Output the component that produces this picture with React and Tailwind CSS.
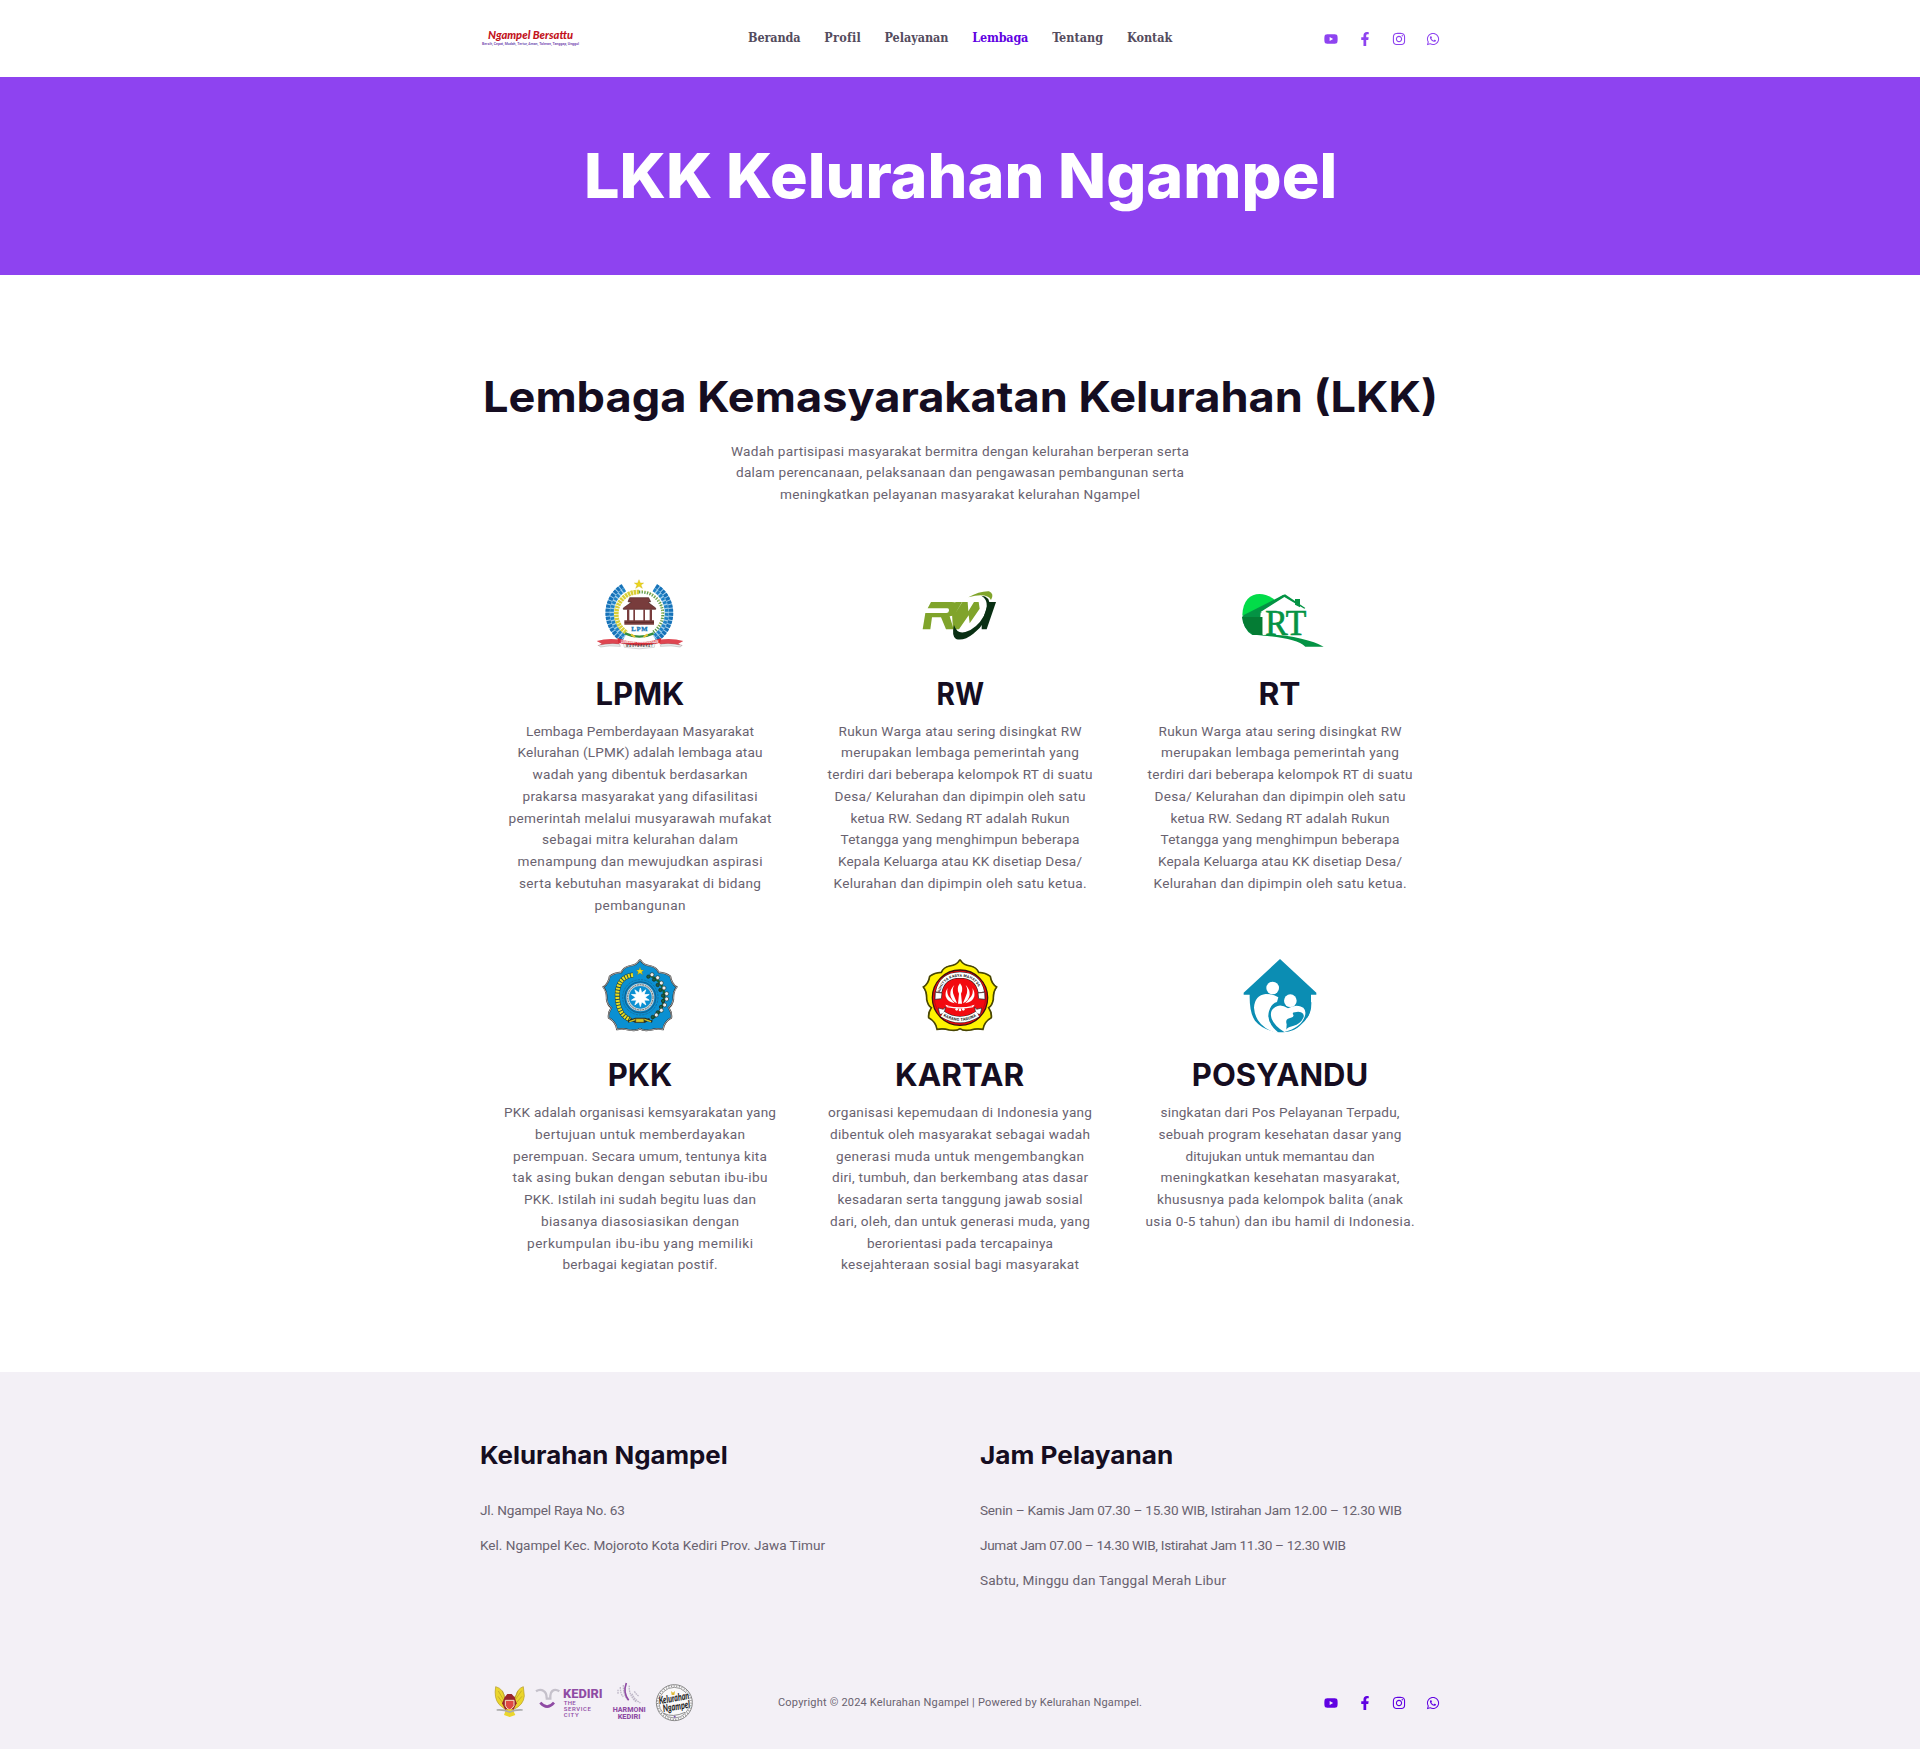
import React, { useLayoutEffect, useRef } from "react";
import { FaYoutube, FaFacebookF, FaInstagram, FaWhatsapp } from "react-icons/fa";

// One line of text, tracked so that it spans the given width.
function Line({ w, children, className = "" }) {
  const ref = useRef(null);
  useLayoutEffect(() => {
    const el = ref.current;
    el.style.letterSpacing = "0px";
    el.style.marginRight = "0px";
    const gap = (w - el.getBoundingClientRect().width) / (children.length - 1);
    el.style.letterSpacing = `${gap}px`;
    el.style.marginRight = `${-gap}px`;
  }, [w, children]);
  return <span ref={ref} className={"inline-block whitespace-nowrap " + className}>{children}</span>;
}

// A heading whose letters are widened or narrowed to span the given width.
function Wide({ w, children, className = "origin-center" }) {
  const ref = useRef(null);
  useLayoutEffect(() => {
    const el = ref.current;
    el.style.transform = `scaleX(${w / el.offsetWidth})`;
  }, [w, children]);
  return <span ref={ref} className={"inline-block whitespace-nowrap " + className}>{children}</span>;
}

function Paragraph({ lines }) {
  return (
    <p className="flex flex-col items-center font-['Roboto',sans-serif] text-[13.6px] leading-[21.76px] text-[#69626f]">
      {lines.map(([t, w], i) => <Line key={i} w={w}>{t}</Line>)}
    </p>
  );
}

function Wordmark() {
  return (
    <svg className="overflow-visible" width="110" height="26" viewBox="0 0 110 26" role="img">
      <text x="8" y="15" fontFamily="Lato, sans-serif" fontStyle="italic" fontWeight="900" fontSize="10.6" fill="#c3131d" textLength="85" lengthAdjust="spacingAndGlyphs">Ngampel Bersattu</text>
      <text x="2" y="21.2" fontFamily="Roboto, sans-serif" fontWeight="700" fontSize="4.4" fill="#7a55b5" textLength="97" lengthAdjust="spacingAndGlyphs">Bersih, Cepat, Mudah, Tertur, Aman, Toleran, Tanggap, Unggul</text>
    </svg>
  );
}

const nav = [["Beranda", 52.5], ["Profil", 35.5], ["Pelayanan", 64], ["Lembaga", 56], ["Tentang", 51], ["Kontak", 45.5]];

function Social({ className }) {
  return (
    <div className={"flex items-center gap-[20px] text-[14px] " + className}>
      <FaYoutube /><FaFacebookF /><FaInstagram /><FaWhatsapp />
    </div>
  );
}

function Lpmk() {
  return (
    <svg width="120" height="90" viewBox="0 0 360 270">
      <path d="M132 53A89 89 0 0 0 132 205M224 53A89 89 0 0 1 224 205" fill="none" stroke="#9fcdec" strokeWidth="25" />
      <path d="M128 48A95 95 0 0 0 128 210M228 48A95 95 0 0 1 228 210" fill="none" stroke="#1672b8" strokeWidth="13" strokeDasharray="9 3" />
      <path d="M135 59A82 82 0 0 0 135 199M221 59A82 82 0 0 1 221 199" fill="none" stroke="#1f82c5" strokeWidth="11" strokeDasharray="8 4" />
      <path d="M177 66A66 66 0 0 0 140 188" fill="none" stroke="#d8cf37" strokeWidth="14" strokeDasharray="7 2" />
      <path d="M177 66A66 66 0 0 1 217 188" fill="none" stroke="#5b9b4c" strokeWidth="9" strokeDasharray="4 4" />
      <path d="M185 62A66 66 0 0 1 230 172" fill="none" stroke="#e0d66a" strokeWidth="3" strokeDasharray="4 6" />
      <circle cx="178" cy="134" r="56" fill="#fff" />
      <path d="M177 29l4 10 10 0-8 6 4 10-10-6-10 6 4-10-8-6 10 0z" fill="#ecd51d" stroke="#c6a90d" />
      <path d="M149 83h57l6 12-8 2 23 17v4h-97v-4l24-17-10-2z" fill="#783c3c" stroke="#4c2424" strokeWidth="2" />
      <path d="M141 118h7v34h-7zM160 118h5v34h-5zM190 118h5v34h-5zM209 118h7v34h-7zM133 151h89v13h-89z" fill="#783c3c" />
      <path d="M134 157h88" stroke="#4c2424" strokeWidth="2" />
      <text x="154" y="184" fontFamily="Liberation Serif, serif" fontWeight="700" fontSize="20" fill="#1778ba" stroke="#1778ba" textLength="49">LPM</text>
      <path d="M135 190q22 10 43 10t43-10" fill="none" stroke="#358e3c" strokeWidth="7" />
      <path d="M153 193l12 8M203 193l-12 8" stroke="#e6c636" strokeWidth="6" />
      <path d="M50 213q34-10 70-4l-2 14q-30-3-66 5l13-7zM310 213q-34-10-73-4l2 14q34-3 69 5l-13-7z" fill="#df4550" />
      <path d="M56 226q38-8 63-3l2 6q-34-4-60 2zM306 226q-38-8-63-3l-2 6q34-4 60 2z" fill="#eee" stroke="#777" />
      <path d="M112 204q67 24 132 0l-3 14q-64 20-126 0z" fill="#d72e3a" />
      <text x="123" y="219" fontFamily="Roboto, sans-serif" fontWeight="700" fontSize="9" fill="#fff" textLength="112">LEMBAGA PEMBERDAYAAN</text>
      <path d="M130 221q48 13 95 0l-2 11q-46 9-90 0z" fill="#f7f7f7" stroke="#999" />
      <text x="138" y="232" fontFamily="Roboto, sans-serif" fontWeight="700" fontSize="8" fill="#444" textLength="80">MASYARAKAT</text>
    </svg>
  );
}

function Rw() {
  return (
    <svg width="120" height="90" viewBox="0 0 360 270">
      <path d="M93 96h62q20 0 15 17l-4 13q-4 12-17 13l12 39h-23l-15-36h-27l-5 36H68l8-49h63q7 0 8-7 1-7-5-7H83z" fill="#80a42b" />
      <path d="M186 96h-20l-10 36 3 46h18l29-42 3 24 30-44-3-20h-14l-17 28-2-28h-16l-21 34z" fill="#80a42b" />
      <path d="M205 82q33-19 62-18 17 8 6 26-12-23-68-8z" fill="#80a42b" />
      <path d="M244 77q26 1 25 32-5 49-49 82-29 23-52 16-14-9-6-42 9 28 34 21 35-11 56-49 20-44-8-60z" fill="#092f13" />
      <path d="M266 96h22l-28 82h-15v-20z" fill="#092f13" />
    </svg>
  );
}

function Rt() {
  return (
    <svg width="120" height="90" viewBox="0 0 360 270">
      <path d="M67 136C68 65 128 58 165 91l-82 45z" fill="#02dc49" />
      <path d="M67 137l105-53 18-10 6 3-74 52-5 66H97q-29-16-30-59z" fill="#049344" />
      <path d="M66 141h62v54H101q-33-20-35-54z" fill="#047c34" />
      <path d="M117 126l74-46 63 38-3 20h-5q-3-10-18-9v57l9 4v4H138V128z" fill="#fff" />
      <path d="M225 87h15v25l-15-8zM192 74l3-1 61 41-3 2-60-35-76 48-13-1z" fill="#049344" />
      <path d="M128 130v63h7v-64z" fill="#fff" />
      <text x="136" y="194" fontFamily="Liberation Serif, serif" fontSize="105" fill="#049344" stroke="#049344" strokeWidth="2" textLength="123" lengthAdjust="spacingAndGlyphs">RT</text>
      <path d="M111 196q69-6 133 10 42 9 67 24h-55q-30-28-145-34z" fill="#049344" />
    </svg>
  );
}

const half = "M180 45Q190 62 211 64Q230 68 236 83Q257 84 271 95Q274 117 290 127Q279 141 280 164Q277 182 266 189Q276 204 274 219Q252 231 249 254Q229 251 212 256Q190 260 180 252";

function Badge({ fill, stroke, edge, children }) {
  return (
    <svg width="120" height="90" viewBox="0 19 360 270">
      <path d={half} fill={fill} stroke={edge} strokeWidth="5" />
      <path d={half} transform="translate(360 0) scale(-1 1)" fill={fill} stroke={edge} strokeWidth="5" />
      <path d={half} fill="none" stroke={stroke} strokeWidth="2" />
      <path d={half} transform="translate(360 0) scale(-1 1)" fill="none" stroke={stroke} strokeWidth="2" />
      {children}
    </svg>
  );
}

const leaves = [[212, 92], [229, 101], [240, 117], [248, 132], [256, 149], [256, 165], [250, 183], [240, 199], [225, 213]];

function Pkk() {
  return (
    <Badge fill="#0b90d2" stroke="#ddd" edge="#333">
      <path d="M180 68l3 8 8 0-6 6 3 8-8-5-8 5 3-8-6-6 8 0z" fill="#f5dd16" stroke="#806e14" />
      <path d="M159 91Q110 97 112 157Q115 212 151 225" fill="none" stroke="#2c3b2a" strokeWidth="15" strokeDasharray="8 1" />
      <path d="M159 91Q110 97 112 157Q115 212 151 225" fill="none" stroke="#eadf20" strokeWidth="12" strokeDasharray="6 3" />
      <path d="M210 93Q253 111 253 158Q247 206 215 222" fill="none" stroke="#116337" strokeWidth="7" />
      {leaves.map(([x, y], i) => (
        <g key={i}>
          <circle cx={x + 4} cy={y - 2} r="6" fill="#eee" stroke="#263830" strokeWidth="2" />
          <circle cx={x - 7} cy={y + 4} r="5" fill="#17653e" stroke="#222" strokeWidth="2" />
        </g>
      ))}
      <circle cx="181" cy="158" r="53" fill="none" stroke="#1c608a" strokeWidth="2" strokeDasharray="7 3" />
      <circle cx="181" cy="158" r="47" fill="#087ebd" stroke="#164e75" strokeWidth="2" />
      <circle cx="181" cy="158" r="38" fill="#0b90d2" stroke="#c7d2d7" strokeWidth="8" />
      <circle cx="181" cy="158" r="38" fill="none" stroke="#59676d" strokeWidth="3" strokeDasharray="5 3" />
      {[0, 36, 72, 108, 144].map((a) => <path key={a} transform={`rotate(${a} 181 158)`} d="M181 130l6 20-6 8-6-8zM181 186l6-20-6-8-6 8z" fill="#fff" stroke="#fff" strokeWidth="2" />)}
      <path d="M144 231l23-8h28l22 8M151 223l15 8h28l15-8" fill="none" stroke="#293022" strokeWidth="7" />
      <path d="M148 231l20-7h25l20 7" fill="none" stroke="#d8c623" strokeWidth="4" />
      <path d="M167 222h25v11h-25z" fill="#d8c623" stroke="#333" strokeWidth="2" />
    </Badge>
  );
}

function Kartar() {
  return (
    <Badge fill="#fff200" stroke="#3c3a00" edge="#55530a">
      <circle cx="180" cy="159" r="83" fill="#f20a10" stroke="#3a1010" strokeWidth="4" />
      <circle cx="180" cy="159" r="77" fill="none" stroke="#5c0808" strokeWidth="1" />
      <path d="M116 143Q126 92 180 91Q234 92 244 143" fill="none" stroke="#222" strokeWidth="20" />
      <path d="M116 142Q126 92 180 91Q234 92 244 142" fill="none" stroke="#fff" strokeWidth="17" />
      <path id="top-arc" d="M120 144Q130 97 180 96Q230 97 240 144" fill="none" />
      <text fontFamily="Roboto, sans-serif" fontWeight="700" fontSize="11" fill="#222"><textPath href="#top-arc" textLength="150">ADHITYA KARYA MAHATVA</textPath></text>
      <path d="M106 143l20 2-2 17-19 2zM254 143l-20 2 2 17 19 2z" fill="#fff" stroke="#222" strokeWidth="2" />
      <path d="M115 190l15 4 6-7-3 20-14 2zM245 190l-15 4-6-7 3 20 14 2z" fill="#fff" stroke="#222" strokeWidth="2" />
      <path d="M127 208Q180 242 233 208" fill="none" stroke="#222" strokeWidth="20" />
      <path d="M127 208Q180 242 233 208" fill="none" stroke="#fff" strokeWidth="17" />
      <path id="low-arc" d="M127 212Q180 246 233 212" fill="none" />
      <text fontFamily="Roboto, sans-serif" fontWeight="700" fontSize="12" fill="#222"><textPath href="#low-arc" textLength="105" startOffset="3">KARANG TARUNA</textPath></text>
      <path d="M180 116q-12 15-3 31l-3 30h12l-3-30q9-16-3-31zM163 121q-9 16-1 32l9 23q-18-9-20-26-1-16 12-29zM197 121q9 16 1 32l-9 23q18-9 20-26 1-16-12-29zM143 130q-4 14 3 25l18 21q-22-4-27-21-2-14 6-25zM217 130q4 14-3 25l-18 21q22-4 27-21 2-14-6-25z" fill="#fff" />
      <path d="M136 180q44 16 88 0l-5 8q-39 8-78 0z" fill="#fff" />
      <path d="M143 184h73" stroke="#f20a10" strokeWidth="2" />
      <circle cx="170" cy="194" r="4" fill="#fff" /><circle cx="180" cy="196" r="4" fill="#fff" /><circle cx="190" cy="194" r="4" fill="#fff" />
    </Badge>
  );
}

function Posyandu() {
  return (
    <svg width="120" height="90" viewBox="0 20 360 270">
      <path d="M180 44L289 145v6h-16v36q-2 31-29 57-20 15-53 20h-21q-44-9-65-35-17-24-16-78H71v-6z" fill="#0b8db3" />
      <circle cx="158" cy="131" r="19" fill="#fff" />
      <circle cx="211" cy="169" r="19" fill="#fff" />
      <path d="M171 173q-12-24-33-24-34 4-36 41 3 47 49 69l14 6h11q-39-31-29-64 7-24 24-28z" fill="#fff" />
      <path d="M171 173l4-14q-20-13-41-8-10 6 37 22z" fill="#fff" />
      <path d="M204 192q-22-15-38-4-19 11-11 35 8 21 38 40 50-14 61-46 6-17-4-27-21-13-46 2z" fill="#fff" />
      <path d="M200 240q-5-15 8-18 17-4 11-12-3-6 6-6 10-3 18 0 12 5 7 16-8 18-31 25-17 4-20 11z" fill="#0b8db3" />
      <path d="M274 178q0 39-35 67l-25 20h78v-87z" fill="#fff" />
      <path d="M253 187q15 14 7 36 15-19 14-50z" fill="#0b8db3" />
    </svg>
  );
}

const rukun = [
  ["Rukun Warga atau sering disingkat RW", 243], ["merupakan lembaga pemerintah yang", 238],
  ["terdiri dari beberapa kelompok RT di suatu", 265], ["Desa/ Kelurahan dan dipimpin oleh satu", 251],
  ["ketua RW. Sedang RT adalah Rukun", 219], ["Tetangga yang menghimpun beberapa", 239],
  ["Kepala Keluarga atau KK disetiap Desa/", 244], ["Kelurahan dan dipimpin oleh satu ketua.", 253],
];

const cards = [
  { title: "LPMK", w: 89, Icon: Lpmk, lines: [
    ["Lembaga Pemberdayaan Masyarakat", 228], ["Kelurahan (LPMK) adalah lembaga atau", 245],
    ["wadah yang dibentuk berdasarkan", 215], ["prakarsa masyarakat yang difasilitasi", 235],
    ["pemerintah melalui musyarawah mufakat", 263], ["sebagai mitra kelurahan dalam", 196],
    ["menampung dan mewujudkan aspirasi", 245], ["serta kebutuhan masyarakat di bidang", 242], ["pembangunan", 91]] },
  { title: "RW", w: 48, Icon: Rw, lines: rukun },
  { title: "RT", w: 42, Icon: Rt, lines: rukun },
  { title: "PKK", w: 65, Icon: Pkk, lines: [
    ["PKK adalah organisasi kemsyarakatan yang", 272], ["bertujuan untuk memberdayakan", 210],
    ["perempuan. Secara umum, tentunya kita", 254], ["tak asing bukan dengan sebutan ibu-ibu", 255],
    ["PKK. Istilah ini sudah begitu luas dan", 232], ["biasanya diasosiasikan dengan", 198],
    ["perkumpulan ibu-ibu yang memiliki", 226], ["berbagai kegiatan postif.", 155]] },
  { title: "KARTAR", w: 129, Icon: Kartar, lines: [
    ["organisasi kepemudaan di Indonesia yang", 264], ["dibentuk oleh masyarakat sebagai wadah", 260],
    ["generasi muda untuk mengembangkan", 248], ["diri, tumbuh, dan berkembang atas dasar", 256],
    ["kesadaran serta tanggung jawab sosial", 245], ["dari, oleh, dan untuk generasi muda, yang", 260],
    ["berorientasi pada tercapainya", 186], ["kesejahteraan sosial bagi masyarakat", 238]] },
  { title: "POSYANDU", w: 176, Icon: Posyandu, lines: [
    ["singkatan dari Pos Pelayanan Terpadu,", 239], ["sebuah program kesehatan dasar yang", 243],
    ["ditujukan untuk memantau dan", 189], ["meningkatkan kesehatan masyarakat,", 239],
    ["khususnya pada kelompok balita (anak", 246], ["usia 0-5 tahun) dan ibu hamil di Indonesia.", 269]] },
];

function FooterLogos() {
  return (
    <svg width="230" height="70" viewBox="0 0 690 210">
      <path d="M47 53q-6 34 10 53l18 15 12-12 14 12q30-13 32-40l-3-28q-17 5-22 27l-13 11-21-1q-2-31-27-37z" fill="#ead52c" stroke="#b49a25" strokeWidth="2" />
      <path d="M55 66l16 27M67 65l11 27M125 65l-19 27M113 67l-9 23M54 82l14 19M126 82l-17 19" stroke="#b49a25" strokeWidth="2" />
      <path d="M82 75l13 0 9 10 6 18-12 24H78L66 103l8-18z" fill="#99252b" />
      <path d="M76 94h26v16q-5 9-13 13-9-4-13-13z" fill="#df4945" stroke="#f2e3c6" strokeWidth="3" />
      <path d="M78 121h20l8 17-17 6-17-6z" fill="#ead52c" />
      <path d="M50 123q20-2 39 6 19-8 39-6" fill="none" stroke="#aaa" strokeWidth="5" />
      <path d="M168 67q12-8 23-1 9 5 9 22M238 67q-12-8-21-1-6 5-6 14v9h-14" fill="none" stroke="#c5c1cb" strokeWidth="7" />
      <path d="M181 101q20 24 41 0" fill="none" stroke="#8f4ba4" strokeWidth="8" />
      <g fontFamily="Roboto, sans-serif" fill="#8f4ba4">
        <text x="249" y="87" fontWeight="800" fontSize="36" textLength="119" lengthAdjust="spacingAndGlyphs">KEDIRI</text>
        <text x="251" y="107" fontWeight="500" fontSize="18" textLength="36">THE</text>
        <text x="251" y="125" fontWeight="500" fontSize="18" textLength="82">SERVICE</text>
        <text x="251" y="143" fontWeight="500" fontSize="18" textLength="45">CITY</text>
        <text x="398" y="129" fontWeight="800" fontSize="22" textLength="99" lengthAdjust="spacingAndGlyphs">HARMONI</text>
        <text x="413" y="150" fontWeight="800" fontSize="22" textLength="68" lengthAdjust="spacingAndGlyphs">KEDIRI</text>
      </g>
      <g fill="none" stroke="#bdb6c6" strokeWidth="4" strokeDasharray="5 2">
        <path d="M414 62v12M421 54q0 22 9 29M430 48q-1 30 15 46M448 50q-3 28 22 50M456 74q6 17 25 28M463 67q7 11 13 14" />
      </g>
      <path d="M439 42q-11 29 7 52" fill="none" stroke="#8f4ba4" strokeWidth="5" />
      <circle cx="583" cy="101" r="54" fill="#faf9fa" stroke="#888" strokeWidth="3" />
      <circle cx="583" cy="101" r="46" fill="none" stroke="#666" strokeWidth="2" />
      <circle cx="583" cy="101" r="50" fill="none" stroke="#888" strokeWidth="4" strokeDasharray="3 5" />
      <path d="M573 66l6 5 6-5-2 12h-8z" fill="#dfbb36" />
      <g transform="rotate(-10 583 101)" fontFamily="Lato, sans-serif" fontWeight="900" fontStyle="italic" fill="#272727" stroke="#faf9fa" strokeWidth="3" paintOrder="stroke">
        <text x="538" y="98" fontSize="32" textLength="92" lengthAdjust="spacingAndGlyphs">Kelurahan</text>
        <text x="546" y="124" fontSize="32" textLength="82" lengthAdjust="spacingAndGlyphs">Ngampel</text>
      </g>
      <path d="M551 133q28 14 64-3" fill="none" stroke="#555" strokeWidth="2" />
      <circle cx="584" cy="143" r="3" fill="#7a55b5" />
    </svg>
  );
}

const heading = "font-['Inter',sans-serif] font-bold text-[#150d21]";

export default function App() {
  return (
    <div className="h-[1749px] overflow-hidden bg-white">
      <header className="h-[77px]">
        <div className="mx-auto flex h-full w-[960px] items-center">
          <div className="w-[268px] shrink-0 pb-[4px]"><Wordmark /></div>
          <nav className="flex gap-[23.8px] pb-[2px] font-['DejaVu_Serif_Condensed','DejaVu_Serif',serif] text-[12.5px] leading-5 font-bold text-[#544c5e]">
            {nav.map(([t, w]) => (
              <a key={t} className={t === "Lembaga" ? "text-[#6002e2]" : ""}><Line w={w}>{t}</Line></a>
            ))}
          </nav>
          <Social className="ml-auto pt-[1px] text-[#8e43f0]" />
        </div>
      </header>

      <section className="flex h-[198px] items-center justify-center bg-[#8e43f0]">
        <h1 className="pl-[2px] font-['Inter',sans-serif] text-[61.5px] leading-[74px] font-extrabold text-white"><Wide w={753}>LKK Kelurahan Ngampel</Wide></h1>
      </section>

      <main className="mx-auto flex w-[960px] flex-col items-center pt-[94px] pb-[96px]">
        <h2 className={"pl-[2px] text-[42.6px] leading-[56px] " + heading}><Wide w={955}>Lembaga Kemasyarakatan Kelurahan (LKK)</Wide></h2>
        <div className="mt-[15.5px]">
          <Paragraph lines={[["Wadah partisipasi masyarakat bermitra dengan kelurahan berperan serta", 458], ["dalam perencanaan, pelaksanaan dan pengawasan pembangunan serta", 448], ["meningkatkan pelayanan masyarakat kelurahan Ngampel", 360]]} />
        </div>
        <div className="mt-[64.2px] grid w-full grid-cols-3 gap-y-[35px]">
          {cards.map(({ title, w, Icon, lines }) => (
            <article key={title} className="flex flex-col items-center">
              <Icon />
              <h3 className={"mt-[14px] mb-[6.6px] text-[31px] leading-[40px] " + heading}><Wide w={w}>{title}</Wide></h3>
              <Paragraph lines={lines} />
            </article>
          ))}
        </div>
      </main>

      <footer className="h-[380px] bg-[#f3f0f6] pt-[67px]">
        <div className="mx-auto w-[960px]">
          <div className="grid h-[153px] grid-cols-[500px_460px]">
            {[
              ["Kelurahan Ngampel", 248, [["Jl. Ngampel Raya No. 63", 145], ["Kel. Ngampel Kec. Mojoroto Kota Kediri Prov. Jawa Timur", 345]]],
              ["Jam Pelayanan", 193, [["Senin – Kamis Jam 07.30 – 15.30 WIB, Istirahan Jam 12.00 – 12.30 WIB", 422], ["Jumat Jam 07.00 – 14.30 WIB, Istirahat Jam 11.30 – 12.30 WIB", 366], ["Sabtu, Minggu dan Tanggal Merah Libur", 246]]],
            ].map(([t, w, rows]) => (
              <div key={t}>
                <h4 className={"text-[24.7px] leading-[32px] " + heading}><Wide w={w} className="origin-left">{t}</Wide></h4>
                <div className="mt-[28px] flex flex-col gap-[13px] font-['Roboto',sans-serif] text-[13.6px] leading-[22px] text-[#69626f]">
                  {rows.map(([r, rw]) => <p key={r}><Line w={rw}>{r}</Line></p>)}
                </div>
              </div>
            ))}
          </div>
          <div className="mt-[77px] flex h-[70px] items-center">
            <FooterLogos />
            <p className="ml-[68px] flex-1 pb-[3px] font-['Roboto',sans-serif] text-[11px] leading-4 text-[#69626f]">
              <Line w={364}>Copyright © 2024 Kelurahan Ngampel | Powered by Kelurahan Ngampel.</Line>
            </p>
            <Social className="pb-[2px] text-[#6002e2]" />
          </div>
        </div>
      </footer>
    </div>
  );
}
